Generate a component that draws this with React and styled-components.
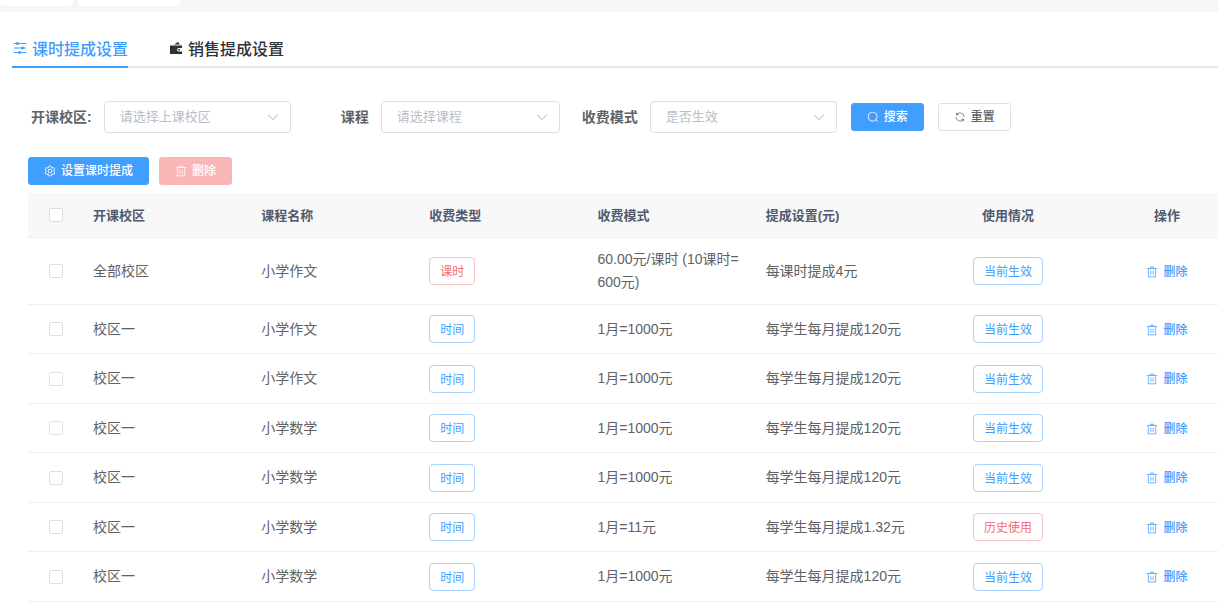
import React, { useState } from "react";
import styled, { createGlobalStyle, css } from "styled-components";

const ICONS = {
  operation:
    "M389.44 768a96.064 96.064 0 0 1 181.12 0H896v64H570.56a96.064 96.064 0 0 1-181.12 0H128v-64h261.44zm192-288a96.064 96.064 0 0 1 181.12 0H896v64H762.56a96.064 96.064 0 0 1-181.12 0H128v-64h453.44zm-320-288a96.064 96.064 0 0 1 181.12 0H896v64H442.56a96.064 96.064 0 0 1-181.12 0H128v-64h133.44z",
  wallet:
    "M688 512a112 112 0 1 0 0 224h208v160H128V352h768v160H688zm32 160h-32a48 48 0 0 1 0-96h32a48 48 0 0 1 0 96zm-80-544 128 160H384l256-160z",
  search:
    "m795.904 750.72 124.992 124.928a32 32 0 0 1-45.248 45.248L750.656 795.904a416 416 0 1 1 45.248-45.248zM480 832a352 352 0 1 0 0-704 352 352 0 0 0 0 704z",
  refresh:
    "M771.776 794.88A384 384 0 0 1 128 512h64a320 320 0 0 0 555.712 216.448H654.72a32 32 0 1 1 0-64h149.056a32 32 0 0 1 32 32v148.928a32 32 0 1 1-64 0v-50.56zM276.288 295.616h92.992a32 32 0 0 1 0 64H220.16a32 32 0 0 1-32-32V178.56a32 32 0 0 1 64 0v50.56A384 384 0 0 1 896.128 512h-64a320 320 0 0 0-555.776-216.384z",
  trash:
    "M160 256H96a32 32 0 0 1 0-64h256V95.936a32 32 0 0 1 32-32h256a32 32 0 0 1 32 32V192h256a32 32 0 1 1 0 64h-64v672a32 32 0 0 1-32 32H192a32 32 0 0 1-32-32V256zm448-64v-64H416v64h192zM224 896h576V256H224v640zm192-128a32 32 0 0 1-32-32V416a32 32 0 0 1 64 0v320a32 32 0 0 1-32 32zm192 0a32 32 0 0 1-32-32V416a32 32 0 0 1 64 0v320a32 32 0 0 1-32 32z",
  arrowDown:
    "M831.872 340.864 512 652.672 192.128 340.864a30.592 30.592 0 0 0-42.752 0 29.12 29.12 0 0 0 0 41.6L489.664 714.24a32 32 0 0 0 44.672 0l340.288-331.712a29.12 29.12 0 0 0 0-41.728 30.592 30.592 0 0 0-42.752 0z",
  setting:
    "M600.704 64a32 32 0 0 1 30.464 22.208l35.2 109.376c14.784 7.232 28.928 15.36 42.432 24.512l112.384-24.192a32 32 0 0 1 34.432 15.36L944.32 364.8a32 32 0 0 1-4.032 37.504l-77.12 85.12a357.12 357.12 0 0 1 0 49.024l77.12 85.248a32 32 0 0 1 4.032 37.504l-88.704 153.6a32 32 0 0 1-34.432 15.296L708.8 803.904c-13.44 9.088-27.648 17.28-42.368 24.512l-35.264 109.376A32 32 0 0 1 600.704 960H423.296a32 32 0 0 1-30.464-22.208L357.696 828.48a351.616 351.616 0 0 1-42.56-24.64l-112.32 24.256a32 32 0 0 1-34.432-15.36L79.68 659.2a32 32 0 0 1 4.032-37.504l77.12-85.248a357.12 357.12 0 0 1 0-48.896l-77.12-85.248A32 32 0 0 1 79.68 364.8l88.704-153.6a32 32 0 0 1 34.432-15.296l112.32 24.256c13.568-9.152 27.776-17.408 42.56-24.64l35.2-109.312A32 32 0 0 1 423.232 64H600.64zm-23.424 64H446.72l-36.352 113.088-24.512 11.968a294.113 294.113 0 0 0-34.816 20.096l-22.656 15.36-116.224-25.088-65.28 113.152 79.68 88.192-1.92 27.136a293.12 293.12 0 0 0 0 40.192l1.92 27.136-79.808 88.192 65.344 113.152 116.224-25.024 22.656 15.296a294.113 294.113 0 0 0 34.816 20.096l24.512 11.968L446.72 896h130.688l36.48-113.152 24.448-11.904a288.282 288.282 0 0 0 34.752-20.096l22.592-15.296 116.288 25.024 65.28-113.152-79.744-88.192 1.92-27.136a293.12 293.12 0 0 0 0-40.256l-1.92-27.136 79.808-88.128-65.344-113.152-116.288 24.96-22.592-15.232a287.616 287.616 0 0 0-34.752-20.096l-24.448-11.904L577.344 128zM512 320a192 192 0 1 1 0 384 192 192 0 0 1 0-384zm0 64a128 128 0 1 0 0 256 128 128 0 0 0 0-256z",
};

const Icon = ({ name, size = 12 }) => (
  <svg viewBox="0 0 1024 1024" width={size} height={size} aria-hidden="true">
    <path fill="currentColor" d={ICONS[name]} />
  </svg>
);

const TABS = [
  { id: "lesson", icon: "operation", label: "课时提成设置" },
  { id: "sales", icon: "wallet", label: "销售提成设置" },
];

const EACH_MONTH = "每学生每月提成120元";

const ROWS = [
  {
    campus: "全部校区",
    course: "小学作文",
    type: "课时",
    mode: "60.00元/课时 (10课时=600元)",
    rule: "每课时提成4元",
    active: true,
  },
  { campus: "校区一", course: "小学作文", type: "时间", mode: "1月=1000元", rule: EACH_MONTH, active: true },
  { campus: "校区一", course: "小学作文", type: "时间", mode: "1月=1000元", rule: EACH_MONTH, active: true },
  { campus: "校区一", course: "小学数学", type: "时间", mode: "1月=1000元", rule: EACH_MONTH, active: true },
  { campus: "校区一", course: "小学数学", type: "时间", mode: "1月=1000元", rule: EACH_MONTH, active: true },
  { campus: "校区一", course: "小学数学", type: "时间", mode: "1月=11元", rule: "每学生每月提成1.32元", active: false },
  { campus: "校区一", course: "小学数学", type: "时间", mode: "1月=1000元", rule: EACH_MONTH, active: true },
];

const SelectField = ({ id, label, placeholder, narrow }) => (
  <Field>
    <FieldLabel htmlFor={id}>{label}</FieldLabel>
    <SelectBox $narrow={narrow}>
      <select id={id} defaultValue="">
        <option value="">{placeholder}</option>
      </select>
      <Icon name="arrowDown" size={14} />
    </SelectBox>
  </Field>
);

const App = () => {
  const [tab, setTab] = useState("lesson");
  const [checked, setChecked] = useState([]);

  const allChecked = checked.length === ROWS.length;

  const toggleAll = () => {
    setChecked(allChecked ? [] : ROWS.map((_, i) => i));
  };

  const toggleRow = (index) => {
    setChecked(
      checked.includes(index)
        ? checked.filter((i) => i !== index)
        : [...checked, index]
    );
  };

  return (
    <>
      <GlobalStyle />
      <TagsView>
        <PageTag $width={73} />
        <PageTag $width={102} />
      </TagsView>
      <Main>
        <TabNav role="tablist">
          {TABS.map((item) => (
            <Tab
              key={item.id}
              type="button"
              role="tab"
              aria-selected={tab === item.id}
              $active={tab === item.id}
              onClick={() => setTab(item.id)}
            >
              <Icon name={item.icon} size={16} />
              {item.label}
            </Tab>
          ))}
        </TabNav>

        <Panel>
          <SearchForm onSubmit={(e) => e.preventDefault()}>
            <SelectField id="campus" label="开课校区:" placeholder="请选择上课校区" />
            <SelectField id="course" label="课程" placeholder="请选择课程" narrow />
            <SelectField id="mode" label="收费模式" placeholder="是否生效" />
            <FormButtons>
              <Button type="submit" $kind="primary">
                <Icon name="search" />
                搜索
              </Button>
              <Button type="reset">
                <Icon name="refresh" />
                重置
              </Button>
            </FormButtons>
          </SearchForm>

          <Toolbar>
            <Button type="button" $kind="primary">
              <Icon name="setting" />
              设置课时提成
            </Button>
            <Button type="button" $kind="danger" disabled={!checked.length}>
              <Icon name="trash" />
              删除
            </Button>
          </Toolbar>

          <TableWrap>
            <Table>
              <colgroup>
                <col className="select" />
                <col span={6} />
                <col className="actions" />
              </colgroup>
              <thead>
                <tr>
                  <HeadCell $center>
                    <Checkbox
                      type="checkbox"
                      aria-label="全选"
                      checked={allChecked}
                      onChange={toggleAll}
                    />
                  </HeadCell>
                  <HeadCell>开课校区</HeadCell>
                  <HeadCell>课程名称</HeadCell>
                  <HeadCell>收费类型</HeadCell>
                  <HeadCell>收费模式</HeadCell>
                  <HeadCell>提成设置(元)</HeadCell>
                  <HeadCell $center>使用情况</HeadCell>
                  <HeadCell $center>操作</HeadCell>
                </tr>
              </thead>
              <tbody>
                {ROWS.map((row, index) => (
                  <Row key={index}>
                    <Cell $center>
                      <Checkbox
                        type="checkbox"
                        aria-label={row.campus + row.course}
                        checked={checked.includes(index)}
                        onChange={() => toggleRow(index)}
                      />
                    </Cell>
                    <Cell>{row.campus}</Cell>
                    <Cell>{row.course}</Cell>
                    <Cell>
                      <Tag $danger={row.type === "课时"}>{row.type}</Tag>
                    </Cell>
                    <Cell>{row.mode}</Cell>
                    <Cell>{row.rule}</Cell>
                    <Cell $center>
                      <Tag $danger={!row.active}>
                        {row.active ? "当前生效" : "历史使用"}
                      </Tag>
                    </Cell>
                    <Cell $center>
                      <LinkButton type="button">
                        <Icon name="trash" />
                        删除
                      </LinkButton>
                    </Cell>
                  </Row>
                ))}
              </tbody>
            </Table>
          </TableWrap>
        </Panel>
      </Main>
    </>
  );
};

const GlobalStyle = createGlobalStyle`
  * {
    box-sizing: border-box;
  }

  body {
    margin: 0;
    overflow: hidden;
    background: #fff;
    color: #606266;
    font-size: 14px;
  }

  body,
  button,
  input,
  select {
    font-family: "Liberation Sans", "Noto Sans CJK SC", sans-serif;
  }

  svg {
    display: block;
    flex-shrink: 0;
  }
`;

const TagsView = styled.div`
  display: flex;
  gap: 5px;
  height: 12px;
  background: #f5f6f8;
`;

const PageTag = styled.div`
  width: ${(props) => props.$width}px;
  height: 6px;
  background: #fff;
  border-radius: 0 0 3px 3px;
`;

const Main = styled.main`
  padding: 16px 0 0 12px;
`;

const TabNav = styled.div`
  display: flex;
  gap: 40px;
  box-shadow: inset 0 -2px #e4e7ed;
`;

const Tab = styled.button`
  display: flex;
  align-items: center;
  gap: 4px;
  height: 40px;
  padding: 2px 0 0;
  border: none;
  border-bottom: 2px solid transparent;
  background: none;
  color: #303133;
  font-size: 16px;
  font-weight: 500;
  cursor: pointer;

  ${(props) =>
    props.$active &&
    css`
      color: #409eff;
      border-color: #409eff;
    `}
`;

const Panel = styled.section`
  padding: 33px 0 0 16px;
`;

const SearchForm = styled.form`
  display: flex;
  align-items: center;
  gap: 18px;
  padding-left: 3px;
`;

const Field = styled.div`
  display: flex;
  align-items: center;
  gap: 12px;
`;

const FieldLabel = styled.label`
  min-width: 60px;
  text-align: right;
  font-weight: 700;
  line-height: 32px;
  white-space: nowrap;
`;

const SelectBox = styled.div`
  display: grid;
  align-items: center;
  width: ${(props) => (props.$narrow ? 179 : 187)}px;

  select,
  svg {
    grid-area: 1 / 1;
  }

  select {
    width: 100%;
    height: 32px;
    padding: 0 32px 2px 15px;
    appearance: none;
    border: 1px solid #dcdfe6;
    border-radius: 4px;
    background: #fff;
    color: #b9bdc6;
    font-size: 13px;
  }

  svg {
    justify-self: end;
    margin-right: 11px;
    color: #b4b8c0;
    pointer-events: none;
  }
`;

const FormButtons = styled.div`
  display: flex;
  gap: 14px;
  margin-left: -4px;
`;

const Toolbar = styled.div`
  display: flex;
  gap: 10px;
  padding: 24px 0 8px;
`;

const Button = styled.button`
  display: inline-flex;
  align-items: center;
  gap: 5px;
  height: 28px;
  padding: 0 15px;
  border: 1px solid #dcdfe6;
  border-radius: 3px;
  background: #fff;
  color: #606266;
  font-size: 12px;
  font-weight: 500;
  line-height: 26px;
  white-space: nowrap;
  cursor: pointer;

  ${(props) =>
    props.$kind === "primary" &&
    css`
      background: #409eff;
      border-color: #409eff;
      color: #fff;
    `}

  ${(props) =>
    props.$kind === "danger" &&
    css`
      background: #f56c6c;
      border-color: #f56c6c;
      color: #fff;
    `}

  &:disabled {
    background: #fab6b6;
    border-color: #fab6b6;
    cursor: not-allowed;
  }
`;

const TableWrap = styled.div`
  overflow: hidden;
`;

/* the action column runs under the right edge of the page */
const Table = styled.table`
  width: calc(100% + 24px);
  table-layout: fixed;
  border-collapse: separate;
  border-spacing: 0;

  .select {
    width: 55px;
  }

  .actions {
    width: 150px;
  }
`;

const HeadCell = styled.th`
  height: 45px;
  padding: 0 10px;
  border-bottom: 1px solid #ebeef5;
  background: #f8f8f9;
  color: #515a6e;
  font-size: 13px;
  font-weight: 700;
  line-height: 23px;
  text-align: ${(props) => (props.$center ? "center" : "left")};
`;

const Row = styled.tr`
  height: 49px;

  &:nth-child(odd) {
    height: 50px;
  }
`;

const Cell = styled.td`
  padding: 10px;
  border-bottom: 1px solid #ebeef5;
  line-height: 23px;
  word-break: break-all;
  text-align: ${(props) => (props.$center ? "center" : "left")};
`;

const Checkbox = styled.input`
  display: block;
  width: 14px;
  height: 14px;
  margin: 0 auto;
  appearance: none;
  border: 1px solid #dcdfe6;
  border-radius: 2px;
  background: #fff;

  &:checked {
    background: #409eff;
    border-color: #409eff;
  }
`;

const Tag = styled.span`
  display: inline-block;
  height: 28px;
  padding: 0 10px;
  border: 1px solid ${(props) => (props.$danger ? "#fbc4c4" : "#a9d3ff")};
  border-radius: 4px;
  color: ${(props) => (props.$danger ? "#f56c6c" : "#409eff")};
  font-size: 12px;
  line-height: 28px;
  white-space: nowrap;
  vertical-align: middle;
`;

const LinkButton = styled.button`
  display: inline-flex;
  align-items: center;
  gap: 5px;
  padding: 0;
  border: none;
  background: none;
  color: #409eff;
  font-size: 12px;
  font-weight: 500;
  line-height: 20px;
  vertical-align: middle;
  cursor: pointer;
`;

export default App;
